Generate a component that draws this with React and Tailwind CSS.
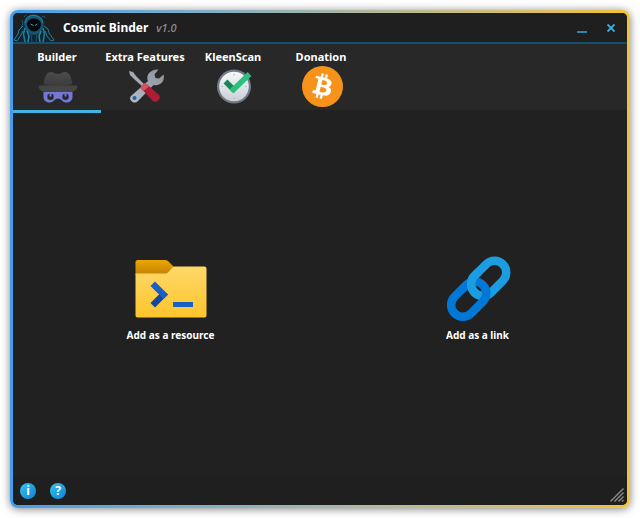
import React, { useState } from 'react';

function HoodLogo() {
  return (
    <svg viewBox="0 0 42 28" className="w-[42px] h-7" fill="none" aria-hidden="true">
      <path d="M20 0.500C14 1 11 5 11 10L9 15L7 19L8 28H34L34 18L31 13C31 6 28 1 20 0.500Z" fill="#0d2733" />
      <path d="M20 0.500C13 1 10.500 6 11.500 12C12 17 16 20 21 21C27 20 30 16 30.500 11C31 5 28 1 20 0.500Z" fill="#165470" />
      <path d="M21 4.500C17 4.500 14 7 14 10.500C14 14 18 17.500 21 17.500C24.500 17.500 28 14 28 10.500C28 7 25 4.500 21 4.500Z" fill="#04080b" />
      <path d="M17.500 10L20.500 11.500M24.500 10L22 11.500" stroke="#2b9cc4" />
      <path d="M12 9C13 4 16 1.500 20 1.500C25 1.500 29 4 30 9" stroke="#2589ae" />
      <path d="M10 12L6 16L5 20L1 26L4 27L8 21L10 17" stroke="#2080a4" />
      <path d="M31 12L35 15L36 19L41 26L38 27L34 22L32 17" stroke="#2080a4" />
      <path d="M12 14L10.500 20L12 28M30 14L31.500 20L30 28" stroke="#1f7d9f" strokeWidth="1.500" />
      <path d="M14 17L16 22L15 28M28 17L26 22L27 28" stroke="#2589ae" strokeWidth="1.500" />
      <path d="M18 20L19 28M24 20L23 28" stroke="#16546d" />
      <path d="M11 3L13 1M9 6L10 10L8 13M29 3L31 2L32 4" stroke="#175a73" />
    </svg>
  );
}

function SpyIcon() {
  return (
    <svg viewBox="0 0 40 40" className="w-10 h-10" aria-hidden="true">
      <defs>
        <linearGradient id="hat" x1="0" y1="0" x2="0" y2="1">
          <stop offset="0" stopColor="#4c4c4c" />
          <stop offset="1" stopColor="#383838" />
        </linearGradient>
      </defs>
      <path d="M5.500 22C5.500 12 8 5 13 5C16 5 17 7 20 7C23 7 24 5 27 5C32 5 34.500 12 34.500 22Z" fill="url(#hat)" />
      <path d="M6 17C14 19 26 19 34 17V20H6Z" fill="#303030" />
      <path d="M2 18.500H38C39 18.500 39.500 19 39.500 20C38.500 23.500 36 25 32 25H8C4 25 1.500 23.500 0.500 20C0.500 19 1 18.500 2 18.500Z" fill="#454545" />
      <path
        fillRule="evenodd"
        d="M5.500 25H34.500V30C34.500 33.500 32 35.500 28 35.500C24.500 35.500 23.500 31.500 20 31.500C16.500 31.500 15.500 35.500 12 35.500C8 35.500 5.500 33.500 5.500 30ZM12.500 26.500A3.200 3.200 0 1 0 12.500 32.900A3.200 3.200 0 1 0 12.500 26.500ZM27.500 26.500A3.200 3.200 0 1 0 27.500 32.900A3.200 3.200 0 1 0 27.500 26.500Z"
        fill="#7478d4"
      />
      <path d="M11.500 26H13.500V29.500H11.500ZM26.500 26H28.500V29.500H26.500Z" fill="#7478d4" />
    </svg>
  );
}

function ToolsIcon() {
  return (
    <svg viewBox="0 0 40 40" className="w-10 h-10" aria-hidden="true">
      <defs>
        <linearGradient id="steel" x1="1" y1="0" x2="0" y2="1">
          <stop offset="0" stopColor="#8a929b" />
          <stop offset="1" stopColor="#b4bcc5" />
        </linearGradient>
      </defs>
      <path d="M3 4L7 5L10 9L20 19L18 21L8 12L4 8Z" fill="#a4abb3" />
      <path
        d="M5.500 28.500L22 14C19.500 8 24.500 2 32.500 2.500L28.500 7.500L29.500 11L33 11.500L37.500 7.500C39.500 13.500 34.500 19.500 27.500 18L12 34C10 36 7 36 5.500 34C3.500 32.500 3.500 30.500 5.500 28.500Z"
        fill="url(#steel)"
      />
      <circle cx="8.500" cy="31" r="2" fill="#1767ad" />
      <path d="M19.500 16C18 16 14.500 19.500 14.500 21L27 34C30 37 36 31.500 33 28Z" fill="#b01c31" />
      <path d="M19.500 16C18 16 14.500 19.500 14.500 21L17.500 24L23 19.500Z" fill="#d5535f" />
    </svg>
  );
}

function CheckClockIcon() {
  return (
    <svg viewBox="0 0 40 40" className="w-10 h-10" aria-hidden="true">
      <defs>
        <linearGradient id="face" x1="0" y1="0" x2="0" y2="1">
          <stop offset="0" stopColor="#f6f7f8" />
          <stop offset="1" stopColor="#ccd1d6" />
        </linearGradient>
      </defs>
      <circle cx="20" cy="19.500" r="17" fill="#707b87" />
      <circle cx="20" cy="19.500" r="14.800" fill="url(#face)" />
      <path d="M20 7V8.500M20 30.500V32M7.500 19.500H9M31 19.500H32.500" stroke="#a8afb6" strokeWidth="1" />
      <path d="M11.500 14.500L20.500 23.500" stroke="#118a55" strokeWidth="5.500" />
      <path d="M17.500 24.500L35.500 7" stroke="#2bc17d" strokeWidth="5.500" />
    </svg>
  );
}

function BitcoinIcon() {
  return (
    <svg viewBox="0 0 64 64" className="w-[41px] h-[41px]" aria-hidden="true">
      <circle cx="32" cy="32" r="32" fill="#f7931a" />
      <path
        d="M46.100 27.440c.637-4.258-2.605-6.547-7.038-8.074l1.438-5.768-3.511-.875-1.400 5.616c-.923-.230-1.871-.447-2.813-.662l1.410-5.653-3.509-.875-1.439 5.766c-.764-.174-1.514-.346-2.242-.527l.004-.018-4.842-1.209-.934 3.750s2.605.597 2.550.634c1.422.355 1.679 1.296 1.636 2.042l-1.638 6.571c.098.025.225.061.365.117l-.371-.092-2.296 9.205c-.174.432-.615 1.080-1.609.834.035.051-2.552-.637-2.552-.637l-1.743 4.019 4.569 1.139c.850.213 1.683.436 2.503.646l-1.453 5.834 3.507.875 1.439-5.772c.958.260 1.888.500 2.798.726l-1.434 5.745 3.511.875 1.453-5.823c5.987 1.133 10.489.676 12.384-4.739 1.527-4.360-.076-6.875-3.226-8.515 2.294-.529 4.022-2.038 4.483-5.155zM38.080 38.690c-1.085 4.360-8.426 2.003-10.806 1.412l1.928-7.729c2.380.594 10.012 1.770 8.878 6.317zM39.166 27.380c-.990 3.966-7.100 1.951-9.082 1.457l1.748-7.010c1.982.494 8.365 1.416 7.334 5.553z"
        fill="#fff"
      />
    </svg>
  );
}

function FolderIcon() {
  return (
    <svg viewBox="0 0 72 72" className="w-[72px] h-[72px]" aria-hidden="true">
      <defs>
        <linearGradient id="folderBack" x1="0" y1="0" x2="0" y2="1">
          <stop offset="0" stopColor="#eba601" />
          <stop offset="1" stopColor="#c28204" />
        </linearGradient>
        <linearGradient id="folderFront" x1="0" y1="0" x2="0" y2="1">
          <stop offset="0" stopColor="#ffd869" />
          <stop offset="1" stopColor="#fec52b" />
        </linearGradient>
      </defs>
      <path d="M2.500 7H30C31 7 32 7.400 33 8L39 14L34 22H0.500V9C0.500 8 1.500 7 2.500 7Z" fill="url(#folderBack)" />
      <path
        d="M0.500 20.500H30C31.500 20.500 32.500 20 33.500 19L37.500 14.500C38 14 38.500 13.500 39.500 13.500H69.500C70.500 13.500 71.500 14.500 71.500 15.500V62.500C71.500 63.700 70.500 64.500 69.500 64.500H2.500C1.500 64.500 0.500 63.700 0.500 62.500Z"
        fill="url(#folderFront)"
      />
      <path d="M28 37.500L33 41.500L20 54.500L15.500 50Z" fill="#1247a3" />
      <path d="M20 28.500L33 41.500L28.500 46L15.500 33Z" fill="#185fc7" />
      <path d="M38 49H58V54H38Z" fill="#1a60c4" />
    </svg>
  );
}

function ChainIcon() {
  return (
    <svg viewBox="0 0 72 72" className="w-[72px] h-[72px]" fill="none" strokeWidth="8.500" aria-hidden="true">
      <rect x="-11.750" y="-20" width="23.500" height="40" rx="11.750" transform="translate(46.700 25.300) rotate(45)" stroke="#1b9de2" />
      <rect x="-11.750" y="-20" width="23.500" height="40" rx="11.750" transform="translate(26.700 46.200) rotate(45)" stroke="#0078d7" />
      <path d="M37 18.400L32.600 22.800A11.750 11.750 0 0 0 38 42.500" stroke="#1b9de2" />
    </svg>
  );
}

function GripIcon() {
  return (
    <svg viewBox="0 0 14 14" className="w-3.5 h-3.5" stroke="#8c8c8c" strokeWidth="1.400" aria-hidden="true">
      <path d="M0.500 13.500L13.500 0.500M4.500 13.500L13.500 4.500M8.500 13.500L13.500 8.500M12 13.500L13.500 12" />
    </svg>
  );
}

const tabs = [
  { name: 'Builder', icon: <SpyIcon /> },
  { name: 'Extra Features', icon: <ToolsIcon /> },
  { name: 'KleenScan', icon: <CheckClockIcon /> },
  { name: 'Donation', icon: <BitcoinIcon /> },
];

const actions = [
  { name: 'Add as a resource', icon: <FolderIcon /> },
  { name: 'Add as a link', icon: <ChainIcon /> },
];

const helpButtons = [
  { label: 'Info', sign: 'i' },
  { label: 'Help', sign: '?' },
];

export default function App() {
  const [activeTab, setActiveTab] = useState(0);

  return (
    <div className="h-screen bg-white p-2.5 font-['Noto_Sans','Open_Sans',sans-serif]">
      <div className="h-full rounded-lg bg-linear-to-r from-[#3f9eee] to-[#f2c230] p-[3px] shadow-[0_1px_9px_rgba(0,0,0,0.5)]">
        <div className="flex flex-col h-full overflow-hidden rounded-[5px] bg-[#212121] text-white">
          <header className="flex items-center shrink-0 h-[31px] bg-[#1f1f1f] border-b-2 border-[#14506d]">
            <HoodLogo />
            <h1 className="ml-2 text-[12px] leading-4 font-bold">Cosmic Binder</h1>
            <span className="ml-2 text-[11px] leading-4 font-medium italic text-[#8f8f8f]">v1.0</span>
            <div className="flex items-center gap-5 ml-auto mr-3">
              <button aria-label="Minimize" className="flex items-end w-2.5 h-2.5 cursor-pointer">
                <span className="w-full h-0.5 bg-[#2b87a8]" />
              </button>
              <button aria-label="Close" className="w-2 h-2 cursor-pointer">
                <svg viewBox="0 0 8 8" className="w-2 h-2" stroke="#3fb4e6" strokeWidth="1.800" aria-hidden="true">
                  <path d="M0.500 0.500L7.500 7.500M7.500 0.500L0.500 7.500" />
                </svg>
              </button>
            </div>
          </header>

          <nav className="flex shrink-0 h-[69px] bg-linear-to-b from-[#282828] from-95% to-[#212121] to-95%">
            {tabs.map((tab, idx) => (
              <button
                key={tab.name}
                onClick={() => setActiveTab(idx)}
                className={`flex flex-col items-center w-[88px] pt-[5px] border-b-[3px] cursor-pointer
                  ${activeTab === idx ? 'border-[#42b3e5]' : 'border-transparent'}`}
              >
                <span className="text-[11px] leading-4 font-bold whitespace-nowrap">{tab.name}</span>
                <span className="flex items-end justify-center w-11 h-[41px] pl-0.5 mt-px">{tab.icon}</span>
              </button>
            ))}
          </nav>

          <main className="grid flex-1 grid-cols-2 items-center pt-1.5">
            {actions.map((action) => (
              <div key={action.name} className="flex justify-center pl-2">
                <button className="flex flex-col items-center gap-0.5 cursor-pointer">
                  {action.icon}
                  <span className="text-[10px] leading-4 font-bold whitespace-nowrap">{action.name}</span>
                </button>
              </div>
            ))}
          </main>

          <footer className="flex items-center shrink-0 h-[29px] pl-[7px] bg-[#1f1f1f]">
            {helpButtons.map((item) => (
              <button
                key={item.label}
                aria-label={item.label}
                className="flex items-center justify-center w-4 h-4 mr-3.5 rounded-full bg-linear-to-br from-[#36c5f0] to-[#107fd6] text-[12px] leading-4 font-bold cursor-pointer"
              >
                {item.sign}
              </button>
            ))}
            <span className="self-end ml-auto mr-[3px] mb-[3px]">
              <GripIcon />
            </span>
          </footer>
        </div>
      </div>
    </div>
  );
}
